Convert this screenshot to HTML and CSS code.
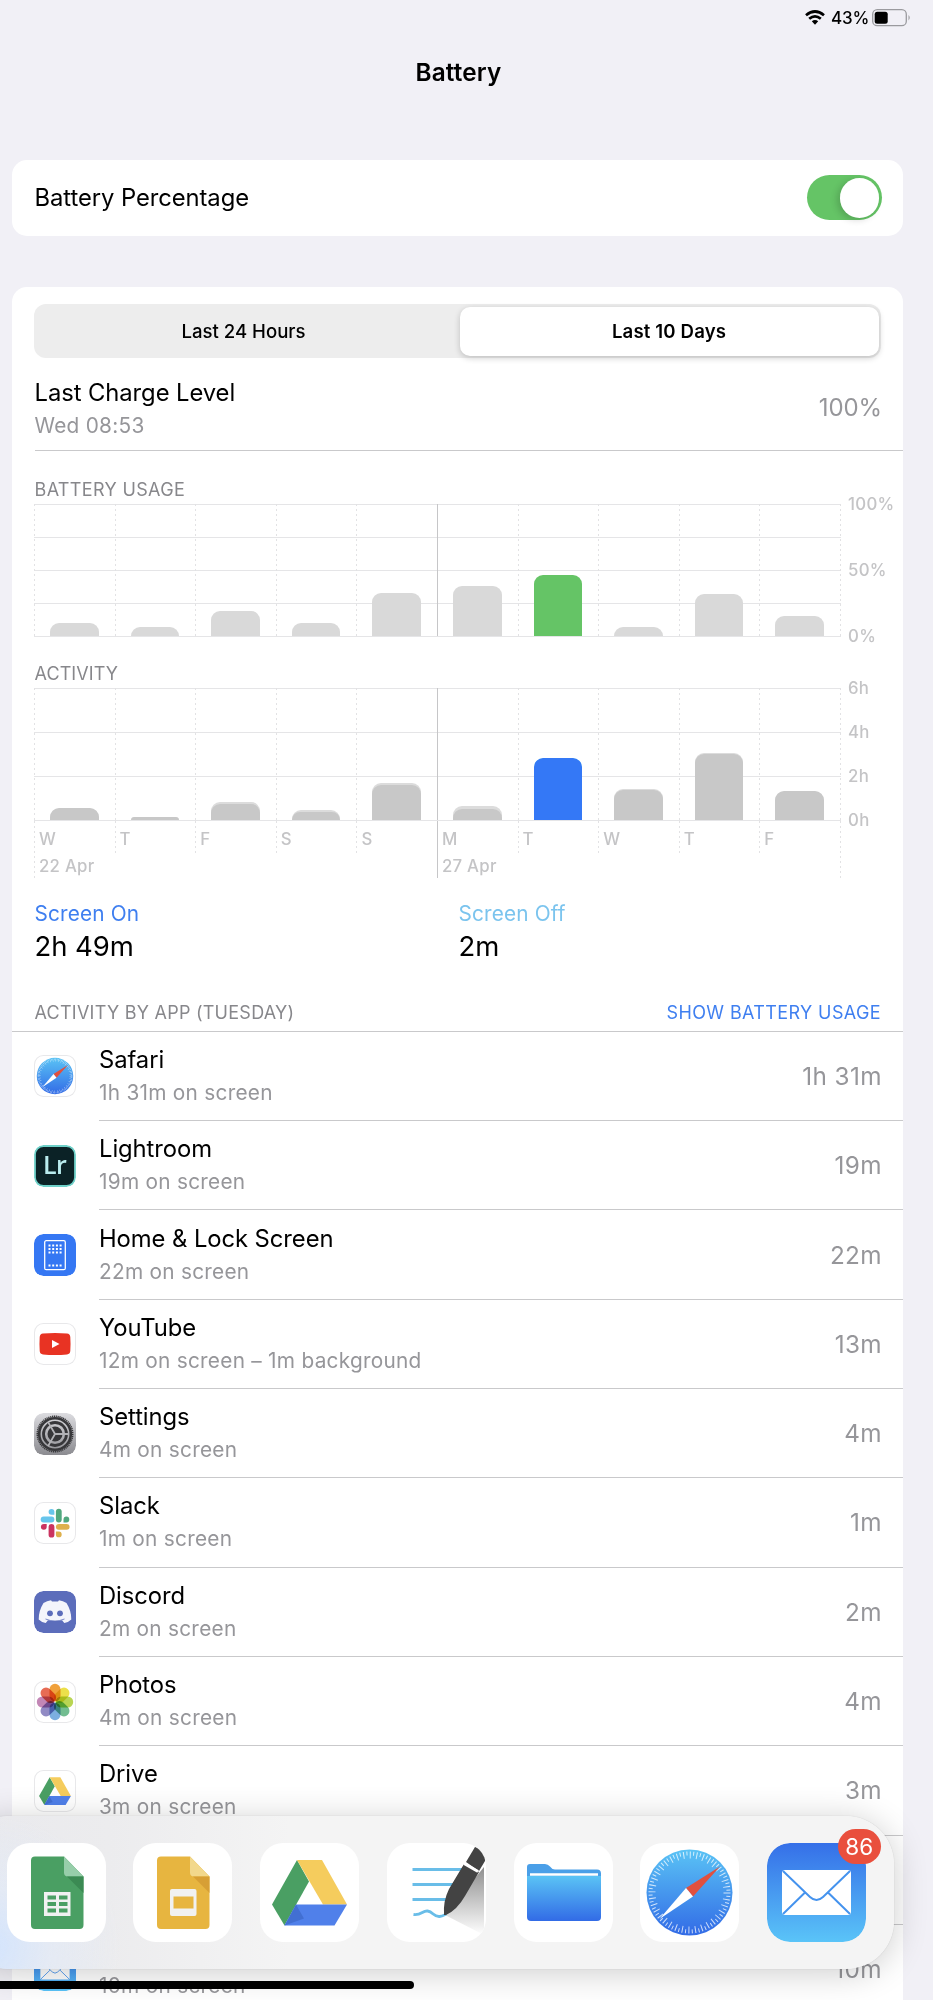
FILE: index.html
```html
<!DOCTYPE html>
<html lang="en">
<head>
    <meta charset="UTF-8">
    <meta name="viewport" content="width=device-width, initial-scale=1.0">
    <title>Battery</title>
    <link rel="stylesheet" href="styles.css">
</head>
<body>
    <!-- Shared icons -->
    <svg class="defs" width="0" height="0">
        <defs>
            <linearGradient id="blue-down" x1="0" y1="0" x2="0" y2="1"><stop offset="0" stop-color="#5ac3f5"/><stop offset="1" stop-color="#326be6"/></linearGradient>
            <linearGradient id="blue-up" x1="0" y1="0" x2="0" y2="1"><stop offset="0" stop-color="#356fe8"/><stop offset="1" stop-color="#5ac4f8"/></linearGradient>
            <linearGradient id="pen-shadow" x1="0" y1="0" x2="0" y2="1"><stop offset="0" stop-color="#8e8e8e"/><stop offset="1" stop-color="#fff"/></linearGradient>
            <linearGradient id="steel" x1="0" y1="0" x2="0" y2="1"><stop offset="0" stop-color="#dcdce0"/><stop offset="1" stop-color="#8b8b90"/></linearGradient>
        </defs>
        <symbol id="safari" viewBox="0 0 99 99">
            <circle cx="49.5" cy="49.5" r="43" fill="url(#blue-down)"/>
            <circle cx="49.5" cy="49.5" r="37.5" fill="none" stroke="#fff" stroke-opacity=".75" stroke-width="7" stroke-dasharray="1 5.545"/>
            <circle cx="49.5" cy="49.5" r="39" fill="none" stroke="#fff" stroke-opacity=".75" stroke-width="4" stroke-dasharray="1 5.807" stroke-dashoffset="3.4"/>
            <path d="M80 23.500L46 45l7 8.500z" fill="#e0503f"/>
            <path d="M19.500 76L46 45l7 8.500z" fill="#fff"/>
        </symbol>
        <symbol id="drive" viewBox="0 0 99 99">
            <path d="M37 17L12 61.500 24.500 82.500 49 38.500z" fill="#4a9f63"/>
            <path d="M37 17h25l25 44.500H63z" fill="#f5cc5d"/>
            <path d="M36 61.500h51L74.500 82.500h-50z" fill="#5080ea"/>
            <path d="M36 61.500l8 14-19.500 7z" fill="#426fd2"/>
        </symbol>
        <symbol id="mail" viewBox="0 0 99 99">
            <rect width="99" height="99" rx="23" fill="url(#blue-up)"/>
            <rect x="15" y="27" width="69" height="45" rx="3" fill="#fff"/>
            <path d="M16 28l27 26q6.500 6 13 0l27-26M16 71l21.500-21M83 71L61.500 50" fill="none" stroke="#4593ee" stroke-width="2"/>
        </symbol>
    </svg>

    <div class="status-bar">
        <svg class="wifi" viewBox="0 0 20 15">
            <g fill="none" stroke="#000" stroke-width="2.700"><path d="M1 5.300Q10-2.300 19 5.300"/><path d="M4.200 8.800Q10 3.800 15.800 8.800"/></g>
            <path d="M6.800 11.300Q10 8.700 13.200 11.300L10 14.700z"/>
        </svg>
        <span class="status-percent">43%</span>
        <svg class="battery" viewBox="0 0 40 18">
            <rect x=".7" y=".7" width="33.600" height="16" rx="4.500" fill="none" stroke="#9a9a9e" stroke-width="1.300"/>
            <rect x="2.700" y="2.700" width="13" height="12" rx="2.500"/>
            <path d="M36.500 6q2.500 2.700 0 5.500z" fill="#9a9a9e"/>
        </svg>
    </div>

    <h1>Battery</h1>

    <div class="card setting">
        <span>Battery Percentage</span>
        <div class="toggle"><div class="knob"></div></div>
    </div>

    <div class="card usage">
        <div class="segmented">
            <div class="segment">Last 24 Hours</div>
            <div class="segment selected">Last 10 Days</div>
        </div>

        <div class="charge">
            <div class="labels">
                <div class="name">Last Charge Level</div>
                <div class="sub">Wed 08:53</div>
            </div>
            <div class="value">100%</div>
        </div>

        <h2 class="chart-title">BATTERY USAGE</h2>
        <div class="chart">
            <div class="plot quarters" id="usage-plot"></div>
            <div class="axis"><span>100%</span><span>50%</span><span>0%</span></div>
        </div>

        <h2 class="chart-title second">ACTIVITY</h2>
        <div class="chart">
            <div class="plot thirds" id="activity-plot"></div>
            <div class="axis"><span>6h</span><span>4h</span><span>2h</span><span>0h</span></div>
        </div>
        <div class="days" id="days"></div>

        <div class="totals">
            <div class="total"><div class="on">Screen On</div><div class="time">2h 49m</div></div>
            <div class="total"><div class="off">Screen Off</div><div class="time">2m</div></div>
        </div>

        <div class="list-header">
            <span class="by-app">ACTIVITY BY APP (TUESDAY)</span>
            <span class="show-usage">SHOW BATTERY USAGE</span>
        </div>

        <div class="app">
            <svg class="icon framed"><use href="#safari"/></svg>
            <div class="app-body"><div class="labels"><div class="name">Safari</div><div class="sub">1h 31m on screen</div></div><div class="value">1h 31m</div></div>
        </div>
        <div class="app">
            <svg class="icon" viewBox="0 0 42 42">
                <rect x="1" y="1" width="40" height="40" rx="8.500" fill="#0b2226" stroke="#6ed0c8" stroke-width="1.800"/>
                <text x="9" y="29" class="lr">Lr</text>
            </svg>
            <div class="app-body"><div class="labels"><div class="name">Lightroom</div><div class="sub">19m on screen</div></div><div class="value">19m</div></div>
        </div>
        <div class="app">
            <svg class="icon" viewBox="0 0 42 42">
                <rect width="42" height="42" rx="9" fill="#3577f3"/>
                <rect x="10.700" y="6.700" width="20.600" height="29" rx="1.500" fill="none" stroke="#fff" stroke-width="1.300"/>
                <path d="M14.500 11.500h14M14.500 15h14M14.500 18.500h14M14.500 31.500h14" stroke="#fff" stroke-width="2" stroke-dasharray="2 1.700"/>
            </svg>
            <div class="app-body"><div class="labels"><div class="name">Home &amp; Lock Screen</div><div class="sub">22m on screen</div></div><div class="value">22m</div></div>
        </div>
        <div class="app">
            <svg class="icon framed" viewBox="0 0 42 42">
                <path d="M9 10.500q12-1 24 0 3 .2 3.300 3.500.5 7 0 14-.3 3.200-3.300 3.400-12 1-24 0-3-.2-3.300-3.400-.5-7 0-14 .3-3.300 3.300-3.500z" fill="#e83323"/>
                <path d="M18 17v8l7.500-4z" fill="#fff"/>
            </svg>
            <div class="app-body"><div class="labels"><div class="name">YouTube</div><div class="sub">12m on screen – 1m background</div></div><div class="value">13m</div></div>
        </div>
        <div class="app">
            <svg class="icon" viewBox="0 0 42 42">
                <rect width="42" height="42" rx="9" fill="url(#steel)"/>
                <circle cx="21" cy="21" r="17.700" fill="none" stroke="#37373a" stroke-width="1.600" stroke-dasharray="1.200 .7"/>
                <circle cx="21" cy="21" r="15.800" fill="none" stroke="#37373a" stroke-width="2.600"/>
                <circle cx="21" cy="21" r="11.500" fill="none" stroke="#37373a" stroke-width="2.800"/>
                <circle cx="21" cy="21" r="7.500" fill="#37373a"/>
                <path d="M21 21h14M21 21l-7-12.100M21 21l-7 12.100" stroke="#b2b2b6" stroke-width="1.800"/>
            </svg>
            <div class="app-body"><div class="labels"><div class="name">Settings</div><div class="sub">4m on screen</div></div><div class="value">4m</div></div>
        </div>
        <div class="app">
            <svg class="icon framed" viewBox="0 0 42 42">
                <g fill="none" stroke-width="5.800" stroke-linecap="round">
                    <path d="M9.600 17.500h7.900" stroke="#67c5ec"/><path d="M24.800 9.600v7.900" stroke="#51a87e"/>
                    <path d="M24.800 24.800h7.900" stroke="#deb04c"/><path d="M17.500 24.800v7.900" stroke="#cb3360"/>
                </g>
                <path d="M20.400 12.700h-2.900a2.900 2.900 0 1 1 2.900-2.900z" fill="#67c5ec"/>
                <path d="M29.500 20.400v-2.900a2.900 2.900 0 1 1 2.900 2.900z" fill="#51a87e"/>
                <path d="M21.900 29.500h2.900a2.900 2.900 0 1 1-2.900 2.900z" fill="#deb04c"/>
                <path d="M12.700 21.900v2.900a2.900 2.900 0 1 1-2.900-2.900z" fill="#cb3360"/>
            </svg>
            <div class="app-body"><div class="labels"><div class="name">Slack</div><div class="sub">1m on screen</div></div><div class="value">1m</div></div>
        </div>
        <div class="app">
            <svg class="icon" viewBox="0 0 42 42">
                <rect width="42" height="42" rx="9" fill="#5c6dbb"/>
                <path d="M9.500 12q3.500-2.300 7.500-2.800l1 1.300h6l1-1.300q4 .5 7.500 2.800 5 8 4.800 16.500-3 3-7 3.500l-2.300-2.800q-7 1.800-14 0l-2.300 2.800q-4-.5-7-3.500Q4.500 20 9.500 12z" fill="#f4f5fb"/>
                <circle cx="16" cy="22.300" r="2.900" fill="#5c6dbb"/><circle cx="26" cy="22.300" r="2.900" fill="#5c6dbb"/>
                <path d="M11.500 28q9.500 4 19 0" fill="none" stroke="#5c6dbb" stroke-width=".8"/>
            </svg>
            <div class="app-body"><div class="labels"><div class="name">Discord</div><div class="sub">2m on screen</div></div><div class="value">2m</div></div>
        </div>
        <div class="app">
            <svg class="icon framed" viewBox="0 0 42 42">
                <g class="petals">
                    <rect x="15.500" y="2.800" width="11" height="17.500" rx="5.500" fill="#f0a13c"/>
                    <rect x="15.500" y="2.800" width="11" height="17.500" rx="5.500" fill="#ece04a" transform="rotate(45 21 21)"/>
                    <rect x="15.500" y="2.800" width="11" height="17.500" rx="5.500" fill="#b9d553" transform="rotate(90 21 21)"/>
                    <rect x="15.500" y="2.800" width="11" height="17.500" rx="5.500" fill="#72bd91" transform="rotate(135 21 21)"/>
                    <rect x="15.500" y="2.800" width="11" height="17.500" rx="5.500" fill="#7caee0" transform="rotate(180 21 21)"/>
                    <rect x="15.500" y="2.800" width="11" height="17.500" rx="5.500" fill="#918ac4" transform="rotate(225 21 21)"/>
                    <rect x="15.500" y="2.800" width="11" height="17.500" rx="5.500" fill="#c387b6" transform="rotate(270 21 21)"/>
                    <rect x="15.500" y="2.800" width="11" height="17.500" rx="5.500" fill="#e76c55" transform="rotate(315 21 21)"/>
                </g>
            </svg>
            <div class="app-body"><div class="labels"><div class="name">Photos</div><div class="sub">4m on screen</div></div><div class="value">4m</div></div>
        </div>
        <div class="app">
            <svg class="icon framed"><use href="#drive"/></svg>
            <div class="app-body"><div class="labels"><div class="name">Drive</div><div class="sub">3m on screen</div></div><div class="value">3m</div></div>
        </div>
        <div class="app"><div class="icon"></div><div class="app-body"></div></div>
        <div class="app">
            <svg class="icon"><use href="#mail"/></svg>
            <div class="app-body"><div class="labels"><div class="name">&nbsp;</div><div class="sub">10m on screen</div></div><div class="value">10m</div></div>
        </div>
    </div>

    <div class="dock">
        <svg class="dock-icon" viewBox="0 0 99 99">
            <path d="M27 13.500h30l19.500 20V82q0 4-4 4H28q-4 0-4-4V17.500q0-4 4-4z" fill="#4a9f63"/>
            <path d="M57 13.500l19.500 20H61q-4 0-4-4z" fill="#97ceaa"/><path d="M60 33.500h16.500V50z" fill="#3b8a53"/>
            <path d="M37 49h26.500v24H37z" fill="#f1f1f1"/>
            <path d="M40.500 52.500h8.500v4h-8.500zM52 52.500h8.500v4H52zM40.500 59h8.500v4h-8.500zM52 59h8.500v4H52zM40.500 65.500h8.500v4h-8.500zM52 65.500h8.500v4H52z" fill="#4a9f63"/>
        </svg>
        <svg class="dock-icon" viewBox="0 0 99 99">
            <path d="M27 13.500h30l19.500 20V82q0 4-4 4H28q-4 0-4-4V17.500q0-4 4-4z" fill="#e7b540"/>
            <path d="M57 13.500l19.500 20H61q-4 0-4-4z" fill="#f2d88c"/><path d="M60 33.500h16.500V50z" fill="#d79f35"/>
            <rect x="37" y="46" width="26.500" height="27" rx="2" fill="#f1f1f1"/><path d="M40.500 53.500h20v12h-20z" fill="#e7b540"/>
        </svg>
        <svg class="dock-icon"><use href="#drive"/></svg>
        <svg class="dock-icon" viewBox="0 0 99 99">
            <path d="M58 72L97 24V92z" fill="url(#pen-shadow)"/>
            <path d="M25.500 26.500H76M25.500 41.500H70M25.500 56.500H64M26.500 71.500c8 1 9-4 14-3.500 6 1 6 6 12 5.500 4-.3 5-2 7-2.500" fill="none" stroke="#69bde8" stroke-width="2.800"/>
            <path d="M57 72q-1-14 5-26L77 21l15 8-14 24q-8 14-19 19z" fill="#434343"/>
            <path d="M79 19L88 4q11 3 10 14l-6 10z" fill="#434343"/>
            <path d="M77 20.500l14 8" stroke="#fff" stroke-width="2.800"/>
        </svg>
        <svg class="dock-icon" viewBox="0 0 99 99">
            <path d="M16 21h15q3 0 5 2.500 2 3 5 3h42q4 0 4 4V45H13V24q0-3 3-3z" fill="#4a9fe8"/>
            <path d="M16 31.500h68" stroke="#fff" stroke-width="2.500"/>
            <path d="M13 33h74v41q0 4-4 4H17q-4 0-4-4z" fill="url(#blue-down)"/>
        </svg>
        <svg class="dock-icon"><use href="#safari"/></svg>
        <div class="dock-mail">
            <svg class="dock-icon"><use href="#mail"/></svg>
            <span class="badge">86</span>
        </div>
    </div>
    <div class="home-indicator"></div>

    <script>
        // heights in px; activity has [screen on, total]
        const usage = [13.5, 9.5, 25, 13.5, 43.5, 50, 61, 9.5, 42, 20];
        const activity = [[12, 12], [3.5, 3.5], [16, 18.5], [8, 10.5], [35, 37], [11, 14], [62, 62.5], [30.5, 31.5], [66, 67.5], [29, 29.5]];
        const names = ['W', 'T', 'F', 'S', 'S', 'M', 'T', 'W', 'T', 'F'];
        const weeks = { 0: '22 Apr', 5: '27 Apr' };
        const selectedDay = 6;

        document.getElementById('usage-plot').innerHTML = usage.map((h, i) =>
            `<div class="day"><div class="bar${i === selectedDay ? ' green' : ''}" style="height:${h}px"></div></div>`).join('');

        document.getElementById('activity-plot').innerHTML = activity.map(([on, total], i) =>
            `<div class="day"><div class="bar total-bar${i === selectedDay ? ' cyan' : ''}" style="height:${total}px"><div class="on-bar" style="height:${on}px"></div></div></div>`).join('');

        document.getElementById('days').innerHTML = names.map((name, i) =>
            `<div class="day-label">${name}${weeks[i] ? `<br>${weeks[i]}` : ''}</div>`).join('');
    </script>
</body>
</html>
```

FILE: styles.css
```css
* { box-sizing: border-box; }
body { position: relative; margin: 0; height: 2000px; overflow: hidden; background-color: #f1f0f6; color: #000; font-family: Inter, "Liberation Sans", sans-serif; }
.defs { position: absolute; }

.status-bar { display: flex; height: 35px; padding-right: 21px; justify-content: flex-end; align-items: center; }
.wifi { width: 20px; height: 15px; margin-right: 6px; }
.status-percent { width: 38px; font-size: 17px; font-weight: 500; letter-spacing: -0.1px; white-space: nowrap; }
.battery { width: 40px; height: 18px; margin-left: 3px; }

h1 { margin: 20px 0 70px; padding-right: 16px; height: 34.5px; line-height: 35px; font-size: 24.3px; font-weight: 600; letter-spacing: 0.15px; text-align: center; }
.card { width: 891px; margin-left: 12px; background-color: #fff; border-radius: 15px; }
.setting { display: flex; justify-content: space-between; align-items: center; height: 76.5px; padding: 0 21px 0 22.5px; font-size: 23.8px; letter-spacing: -0.07px; }
.toggle { width: 75px; height: 45px; padding: 3px; border-radius: 23px; background-color: #65c466; }
.knob { width: 39.5px; height: 39.5px; margin-left: auto; border-radius: 50%; background-color: #fff; box-shadow: -3px 2px 7px rgba(0,0,0,0.16); }

.usage { margin-top: 51px; padding-top: 17px; border-radius: 15px 15px 0 0; height: 1720px; }
.segmented { display: flex; width: 847px; height: 54px; margin-left: 22px; padding: 2.5px; justify-content: space-between; border-radius: 12px; background-color: #ededed; }
.segment { width: 414px; border-radius: 10px; font-size: 18.6px; font-weight: 500; line-height: 49px; text-align: center; }
.selected { width: 419px; background-color: #fff; font-weight: 600; letter-spacing: 0.15px; box-shadow: 0 2px 6px rgba(0,0,0,0.2); }

.charge { display: flex; height: 93px; margin-left: 22.5px; padding: 6px 21px 0 0; align-items: center; justify-content: space-between; border-bottom: 1px solid #c9c9cb; }
.charge .labels { padding-top: 3px; }
.name { line-height: 33px; font-size: 23.8px; letter-spacing: -0.07px; }
.sub { line-height: 33px; font-size: 20.8px; letter-spacing: 0.27px; color: #96969a; }
.value { font-size: 24px; letter-spacing: -0.1px; color: #96969a; }
.app .value { font-size: 24.3px; letter-spacing: 0.4px; }

.chart-title { margin: 29px 0 0 22.5px; height: 24px; line-height: 20px; font-size: 18px; font-weight: 400; letter-spacing: 0.35px; color: #87878b; }
.chart-title.second { margin-top: 27px; letter-spacing: 0.1px; }
.chart { display: flex; margin-left: 22px; height: 133px; }
.plot { display: flex; width: 807px; border-bottom: 1px solid #e5e5e7; background-repeat: repeat-y; }
.quarters { background-image: linear-gradient(#e5e5e7 1px, transparent 1px); background-size: 100% 33px; }
.thirds { background-image: linear-gradient(#e5e5e7 1px, transparent 1px); background-size: 100% 44px; }
.day { display: flex; flex: 1; align-items: flex-end; justify-content: center; }
.day, .day-label, .plot::after, .days::after { background: repeating-linear-gradient(#e2e2e4 0 2.5px, transparent 2.5px 5px) left top / 1px 100% no-repeat; }
.plot::after, .days::after { content: ""; width: 1px; }
.day:nth-child(6), .day-label:nth-child(6) { background: linear-gradient(#c6c6c8, #c6c6c8) left top / 1px 100% no-repeat; }
.bar { width: 48.5px; overflow: hidden; border-radius: 9px 9px 0 0; background-color: #d9d9d9; }
.green { background-color: #65c466; }
.total-bar { display: flex; align-items: flex-end; background-color: #dcdcdc; }
.on-bar { width: 100%; border-radius: 9px 9px 0 0; background-color: #c8c8c8; }
.cyan { background-color: #78c4f0; }
.cyan .on-bar { background-color: #3478f6; }
.axis { display: flex; flex-direction: column; justify-content: space-between; margin: -10px 0 -9px 7px; line-height: 20px; font-size: 16.8px; font-weight: 500; letter-spacing: 0.3px; color: #c4c4c6; }
.days { display: flex; width: 807px; height: 57px; margin-left: 22px; }
.day-label { flex: 1; height: 33px; padding: 5px 0 0 5px; white-space: nowrap; line-height: 26.5px; font-size: 16.8px; font-weight: 500; letter-spacing: 0.25px; color: #c4c4c6; }
.day-label:nth-child(1), .day-label:nth-child(6) { height: 57px; }

.totals { display: flex; margin: 19.5px 0 0 22.5px; }
.total { width: 424px; }
.on, .off { line-height: 31px; font-size: 20.8px; letter-spacing: 0.15px; color: #3f7ff0; }
.off { color: #7bc4ee; }
.time { line-height: 34px; font-size: 27.5px; letter-spacing: -0.05px; }
.list-header { display: flex; justify-content: space-between; height: 69.2px; padding: 40.6px 22px 0 22.5px; border-bottom: 1px solid #c9c9cb; font-size: 18px; line-height: 20px; }
.by-app { letter-spacing: 0.25px; color: #87878b; }
.show-usage { letter-spacing: 0.38px; color: #3f7ff0; }

.app { display: flex; height: 89.33px; padding-left: 22px; align-items: center; }
.icon { flex: none; width: 42px; height: 42px; border-radius: 9.5px; }
.framed { background-color: #fff; box-shadow: inset 0 0 0 1px #e8e8ea; }
.lr { font-family: "Open Sans", sans-serif; font-size: 25px; font-weight: 600; letter-spacing: -0.5px; fill: #b9ecee; }
.petals rect { mix-blend-mode: multiply; }
.app-body { display: flex; flex: 1; height: 100%; margin-left: 23px; padding-right: 21px; align-items: center; justify-content: space-between; border-bottom: 1px solid #c9c9cb; }

.dock { position: absolute; left: -40px; top: 1815.5px; display: flex; width: 933.5px; height: 153.5px; padding: 27.5px 27.5px 0 46.5px; gap: 27.8px; border-radius: 48px; background: radial-gradient(circle at 30px 130px, #d3e4fd 0, rgba(226,234,247,0.7) 60px, transparent 130px), linear-gradient(90deg, #e9e9ed, #ececee 150px, #f4f4f4 330px); box-shadow: 0 0 1px rgba(0,0,0,0.25), 0 4px 34px rgba(0,0,0,0.2); }
.dock-icon { display: block; flex: none; width: 99px; height: 99px; border-radius: 23px; background-color: #fff; }
.dock-mail { position: relative; }
.dock-mail .dock-icon { background: none; }
.badge { position: absolute; top: -14.5px; right: -14.5px; width: 43px; height: 35px; border-radius: 18px; background-color: #e94f3d; color: #fff; font-size: 22.5px; line-height: 35px; text-align: center; }
.home-indicator { position: absolute; left: -20px; top: 1981px; width: 434px; height: 8px; border-radius: 4px; background-color: #000; }
```
